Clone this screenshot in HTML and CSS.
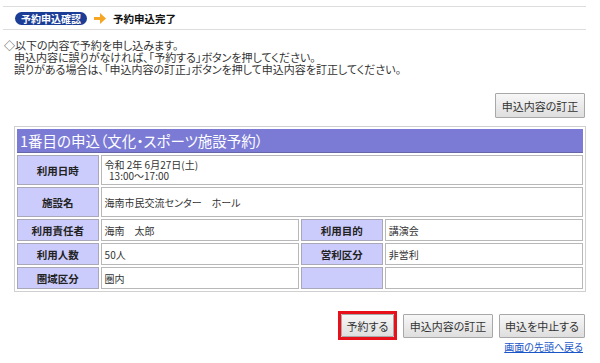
FILE: index.html
```html
<!DOCTYPE html>
<html lang="ja">
<head>
    <meta charset="UTF-8">
    <title>予約申込確認</title>
    <link rel="stylesheet" href="styles.css">
</head>
<body>
    <div class="steps">
        <span class="badge">予約申込確認</span>
        <svg class="arrow" width="12" height="11" viewBox="0 0 12 11">
            <path d="M0 4h6V0l6 5.5L6 11V7H0z" fill="#f6a623"/>
        </svg>
        <span class="step-next">予約申込完了</span>
    </div>

    <div class="intro">
        <p>◇以下の内容で予約を申し込みます。</p>
        <p class="indent">申込内容に誤りがなければ、「予約する」ボタンを押してください。</p>
        <p class="indent">誤りがある場合は、「申込内容の訂正」ボタンを押して申込内容を訂正してください。</p>
    </div>

    <div class="top-actions">
        <button class="btn btn-wide">申込内容の訂正</button>
    </div>

    <table class="detail">
        <tr>
            <th colspan="4" class="caption">1番目の申込（文化・スポーツ施設予約）</th>
        </tr>
        <tr class="row-tall">
            <th>利用日時</th>
            <td colspan="3">令和 2年 6月27日(土)<br>&nbsp;&nbsp;13:00～17:00</td>
        </tr>
        <tr class="row-tall">
            <th>施設名</th>
            <td colspan="3">海南市民交流センター　ホール</td>
        </tr>
        <tr>
            <th>利用責任者</th>
            <td>海南　太郎</td>
            <th>利用目的</th>
            <td>講演会</td>
        </tr>
        <tr>
            <th>利用人数</th>
            <td>50人</td>
            <th>営利区分</th>
            <td>非営利</td>
        </tr>
        <tr>
            <th>圏域区分</th>
            <td>圏内</td>
            <th></th>
            <td></td>
        </tr>
    </table>

    <div class="bottom-actions">
        <span class="focus"><button class="btn btn-small">予約する</button></span>
        <button class="btn btn-wide">申込内容の訂正</button>
        <button class="btn btn-mid">申込を中止する</button>
    </div>
    <div class="back-link"><a href="#">画面の先頭へ戻る</a></div>
</body>
</html>
```

FILE: styles.css
```css
body { margin: 0; font-family: "Noto Sans CJK JP", "Noto Sans", sans-serif; color: #222; background: #fff; font-feature-settings: "palt"; }
p { margin: 0; }

.steps { display: flex; align-items: center; margin: 6px 14px 0 3px; height: 22px; border-top: 1px solid #ddd; border-bottom: 1px solid #ddd; }
.badge { margin-left: 12px; height: 13px; line-height: 13px; padding: 0 6px; background: #1c3d96; color: #fff; font-size: 10px; font-weight: bold; border-radius: 7px; }
.arrow { margin-left: 7px; }
.step-next { margin-left: 7px; font-size: 10.5px; font-weight: bold; color: #111; }

.intro { margin-top: 9px; padding-left: 4px; font-size: 11px; line-height: 12px; color: #333; }
.intro .indent { padding-left: 10px; }

.btn { height: 24px; padding: 0; font-family: inherit; font-size: 11px; color: #333; background: linear-gradient(#f7f7f7, #dedede); border: 1px solid #a8a8a8; border-radius: 1px; font-feature-settings: "palt"; }
.btn-wide { width: 90px; }
.btn-mid { width: 86px; }
.btn-small { width: 53px; height: 23px; }

.top-actions { display: flex; justify-content: flex-end; margin: 18px 15px 0 0; }
.top-actions .btn { height: 25px; }

.detail { margin: 8px 0 0 14px; width: 572px; border: 1px solid #d0d0d0; border-spacing: 2px; font-size: 10px; }
.detail .caption { height: 23px; padding: 0 3px; text-align: left; background: #7b7bd6; color: #fff; font-size: 14.5px; font-weight: normal; border: none; border-bottom: 1px solid #6666a8; }
.detail th { width: 81px; height: 20px; padding: 0; background: #ccccfc; border: 1px solid #a8a8b8; font-size: 10.5px; font-weight: bold; color: #222; }
.detail td { width: 194px; padding: 0 3px; background: #fff; border: 1px solid #b8b8b8; color: #333; line-height: 11px; }
.detail .row-tall th, .detail .row-tall td { height: 28px; }

.bottom-actions { display: flex; justify-content: flex-end; align-items: center; gap: 6px; margin: 19px 15px 0 0; }
.focus { display: flex; border: 3px solid #e8101a; }
.back-link { text-align: right; margin: 1px 17px 0 0; font-size: 10px; line-height: 12px; }
.back-link a { color: #1a55c8; }
```
